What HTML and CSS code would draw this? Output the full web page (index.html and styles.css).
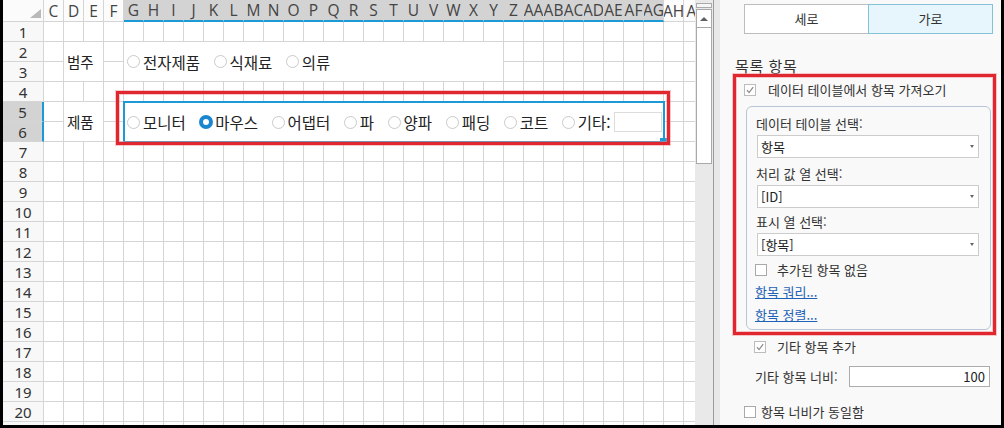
FILE: index.html
```html
<!DOCTYPE html>
<html lang="ko">
<head>
<meta charset="utf-8">
<title>목록 항목</title>
<link rel="stylesheet" href="styles.css">
</head>
<body>
<div class="frame">
  <div class="sheet">
    <div class="colhead">
      <div class="corner"><span class="tri"></span></div>
      <div class="ch">C</div><div class="ch">D</div><div class="ch">E</div><div class="ch">F</div>
      <div class="ch sel">G</div><div class="ch sel">H</div><div class="ch sel">I</div><div class="ch sel">J</div>
      <div class="ch sel">K</div><div class="ch sel">L</div><div class="ch sel">M</div><div class="ch sel">N</div>
      <div class="ch sel">O</div><div class="ch sel">P</div><div class="ch sel">Q</div><div class="ch sel">R</div>
      <div class="ch sel">S</div><div class="ch sel">T</div><div class="ch sel">U</div><div class="ch sel">V</div>
      <div class="ch sel">W</div><div class="ch sel">X</div><div class="ch sel">Y</div><div class="ch sel">Z</div>
      <div class="ch sel">AA</div><div class="ch sel">AB</div><div class="ch sel">AC</div><div class="ch sel">AD</div>
      <div class="ch sel">AE</div><div class="ch sel">AF</div><div class="ch sel">AG</div>
      <div class="ch">AH</div><div class="ch">AI</div>
    </div>
    <div class="sbody">
      <div class="rowhead">
        <div class="rh">1</div><div class="rh">2</div><div class="rh">3</div><div class="rh">4</div>
        <div class="rh sel">5</div><div class="rh sel">6</div><div class="rh">7</div><div class="rh">8</div>
        <div class="rh">9</div><div class="rh">10</div><div class="rh">11</div><div class="rh">12</div>
        <div class="rh">13</div><div class="rh">14</div><div class="rh">15</div><div class="rh">16</div>
        <div class="rh">17</div><div class="rh">18</div><div class="rh">19</div><div class="rh">20</div>
        <div class="rh"></div>
      </div>
      <div class="cells">
        <div class="merged cat-label">범주</div>
        <div class="merged cat-radios radios">
          <span class="ri"><span class="rc"></span>전자제품</span>
          <span class="ri"><span class="rc"></span>식재료</span>
          <span class="ri"><span class="rc"></span>의류</span>
        </div>
        <div class="merged prod-label">제품</div>
        <div class="selection radios">
          <span class="ri"><span class="rc"></span>모니터</span>
          <span class="ri"><span class="rc on"></span>마우스</span>
          <span class="ri"><span class="rc"></span>어댑터</span>
          <span class="ri"><span class="rc"></span>파</span>
          <span class="ri"><span class="rc"></span>양파</span>
          <span class="ri"><span class="rc"></span>패딩</span>
          <span class="ri"><span class="rc"></span>코트</span>
          <span class="ri last"><span class="rc"></span>기타:<span class="other"></span></span>
          <span class="handle"></span>
        </div>
        <div class="sheet-mark"></div>
      </div>
    </div>
  </div>

  <div class="vscroll">
    <div class="split"></div>
    <div class="sbtn"><span class="uparrow"></span></div>
    <div class="thumb"></div>
  </div>
  <div class="splitter"></div>

  <div class="panel">
    <div class="seg">
      <div class="segbtn">세로</div>
      <div class="segbtn on">가로</div>
    </div>
    <div class="ptitle">목록 항목</div>
    <div class="pmark">
      <div class="chk first"><span class="box checked"><svg viewBox="0 0 12 12" width="12" height="12"><path d="M3 6.3 L5.1 8.6 L9.2 3.2" fill="none" stroke="#8e8e8e" stroke-width="1.3"/></svg></span><span>데이터 테이블에서 항목 가져오기</span></div>
      <div class="group">
        <div class="flabel l1">데이터 테이블 선택:</div>
        <div class="dd"><span>항목</span><span class="caret"></span></div>
        <div class="flabel l2">처리 값 열 선택:</div>
        <div class="dd"><span>[ID]</span><span class="caret"></span></div>
        <div class="flabel l3">표시 열 선택:</div>
        <div class="dd"><span>[항목]</span><span class="caret"></span></div>
        <div class="chk inner"><span class="box"></span><span>추가된 항목 없음</span></div>
        <a class="lnk l-a" href="#">항목 쿼리...</a>
        <a class="lnk l-b" href="#">항목 정렬...</a>
      </div>
    </div>
    <div class="chk other-add"><span class="box checked"><svg viewBox="0 0 12 12" width="12" height="12"><path d="M3 6.3 L5.1 8.6 L9.2 3.2" fill="none" stroke="#8e8e8e" stroke-width="1.3"/></svg></span><span>기타 항목 추가</span></div>
    <div class="frow"><span>기타 항목 너비:</span><div class="num">100</div></div>
    <div class="chk same"><span class="box"></span><span>항목 너비가 동일함</span></div>
  </div>
</div>
</body>
</html>
```

FILE: styles.css
```css
* { box-sizing: border-box; }
html, body { margin: 0; padding: 0; }
body {
  background: #000;
  width: 1004px;
  height: 428px;
  overflow: hidden;
  font-family: "Noto Sans CJK KR", "Noto Sans", sans-serif;
  color: #333;
}
.frame {
  display: flex;
  margin: 0 3px;
  height: 425px;
  background: #fff;
  overflow: hidden;
}

/* ---------- sheet ---------- */
.sheet {
  width: 692px;
  flex: none;
  overflow: hidden;
  display: flex;
  flex-direction: column;
  background: #fff;
}
.colhead { display: flex; height: 22px; flex: none; }
.corner {
  width: 41px;
  flex: none;
  border-right: 1px solid #d5d5d5;
  border-bottom: 1px solid #d5d5d5;
  background: #fbfbfb;
  display: flex;
  justify-content: flex-end;
  align-items: flex-end;
  padding: 0 2px 3px 0;
}
.tri {
  width: 0; height: 0;
  border-left: 11px solid transparent;
  border-bottom: 9px solid #b9b9b9;
}
.ch {
  width: 20px;
  flex: none;
  border-right: 1px solid #d5d5d5;
  border-bottom: 1px solid #d5d5d5;
  display: flex;
  justify-content: center;
  align-items: center;
  overflow: hidden;
  white-space: nowrap;
  font: 15.5px/20px "Open Sans", "Noto Sans", sans-serif;
  color: #444;
  background: #fcfcfc;
}
.ch.sel {
  background: #d3d3d3;
  border-right-color: #d3d3d3;
  border-bottom: 2px solid #1b9ad6;
}
.sbody { display: flex; flex: 1; min-height: 0; }
.rowhead { width: 41px; flex: none; display: flex; flex-direction: column; }
.rh {
  height: 20px;
  flex: none;
  border-right: 1px solid #d5d5d5;
  border-bottom: 1px solid #d5d5d5;
  background: #f8f8f8;
  display: flex;
  align-items: center;
  justify-content: center;
  font: 15px/20px "Noto Sans", sans-serif;
  color: #333;
}
.rh.sel { background: #d3d3d3; border-right: 2px solid #1b9ad6; }

.cells {
  width: 660px;
  flex: none;
  display: grid;
  grid-template-columns: repeat(33, 20px);
  grid-template-rows: repeat(21, 20px);
  background-color: #fff;
  background-image:
    linear-gradient(90deg, transparent 19px, #d5d5d5 19px),
    linear-gradient(180deg, transparent 19px, #d5d5d5 19px);
  background-size: 20px 20px;
}
.merged {
  background: #fff;
  margin: 0 1px 1px 0;
  display: flex;
  align-items: center;
  font-size: 14.5px;
  line-height: 20px;
  color: #222;
}
.cat-label { grid-column: 2 / span 2; grid-row: 2 / span 2; padding-left: 3px; }
.prod-label { grid-column: 2 / span 2; grid-row: 5 / span 2; padding-left: 3px; }
.cat-radios { grid-column: 5 / span 19; grid-row: 2 / span 2; padding-left: 3px; }

.radios { display: flex; align-items: center; font-size: 15.5px; line-height: 20px; color: #222; white-space: nowrap; }
.ri { display: flex; align-items: center; gap: 3px; margin-right: 13.5px; }
.ri.last { margin-right: 0; }
.rc {
  width: 13px; height: 13px;
  border-radius: 50%;
  border: 1px solid #cacaca;
  background: #fff;
  flex: none;
}
.rc.on { width: 14px; height: 14px; border: 4px solid #1a86cf; margin-right: -1px; }
.other {
  width: 48px; height: 20px;
  border: 1px solid #dcdcdc;
  background: #fff;
}
.selection {
  grid-column: 5 / span 27;
  grid-row: 5 / span 2;
  margin: -1px;
  border: 2px solid #1b9ad6;
  background: #fff;
  padding-left: 2px;
  position: relative;
}
.handle {
  position: absolute;
  right: -4px;
  bottom: -3px;
  width: 7px; height: 6px;
  background: #1b9ad6;
}
.sheet-mark {
  grid-column: 5 / span 27;
  grid-row: 5 / span 2;
  margin: -11px -6px -3px -8px;
  border: 3px solid #e0262f;
  box-shadow: 0 0 0 1px rgba(240, 130, 135, .45), inset 0 0 0 1px rgba(240, 130, 135, .45);
  z-index: 2;
  pointer-events: none;
}

/* ---------- scrollbar ---------- */
.vscroll {
  width: 18px;
  flex: none;
  background: #e9e9e9;
  display: flex;
  flex-direction: column;
  align-items: center;
  padding-top: 3px;
}
.split { width: 16px; height: 5px; border: 1px solid #a9a9a9; background: #f6f6f6; flex: none; }
.sbtn {
  width: 16px; height: 19px;
  margin-top: 1px;
  border: 1px solid #a9a9a9;
  background: #fff;
  display: flex; justify-content: center; align-items: center;
  flex: none;
}
.uparrow {
  width: 0; height: 0;
  border-left: 4px solid transparent;
  border-right: 4px solid transparent;
  border-bottom: 4px solid #5e5e5e;
}
.thumb { width: 16px; height: 137px; margin-top: -1px; border: 1px solid #a9a9a9; background: #fff; flex: none; }
.splitter { width: 7px; flex: none; background: #e8e8e8; border-left: 1px solid #9c9c9c; }

/* ---------- panel ---------- */
.panel {
  width: 281px;
  flex: none;
  background: #f9f9f9;
  padding: 4px 8px 0 24px;
  display: flex;
  flex-direction: column;
  font-size: 13px;
  line-height: 16px;
  color: #333;
}
.seg { display: flex; height: 30px; flex: none; }
.segbtn {
  flex: 1;
  display: flex; align-items: center; justify-content: center;
  background: #fff;
  border: 1px solid #bdbdbd;
  color: #333;
}
.segbtn.on { background: #e6f6fc; border-color: #83c3d5; margin-left: -1px; }
.ptitle {
  margin: 23px 0 0 -9px;
  font-size: 15px;
  line-height: 17px;
  letter-spacing: 0.6px;
  color: #333;
}
.pmark {
  margin: 0 -3px 0 -11px;
  border: 3px solid #e0262f;
  box-shadow: 0 0 0 1px rgba(240, 130, 135, .45), inset 0 0 0 1px rgba(240, 130, 135, .45);
  padding: 5px 2px 0 8px;
}
.chk { display: flex; align-items: center; height: 16px; white-space: nowrap; }
.box {
  width: 12px; height: 12px;
  border: 1px solid #a9a9a9;
  background: #fff;
  flex: none;
  display: flex; align-items: center; justify-content: center;
}
.box svg { display: block; flex: none; }
.box.checked { border-color: #bcbcbc; }
.chk.first .box { margin-right: 12px; }
.group {
  margin: 8px 0 2px 2px;
  border: 1px solid #b9c5d6;
  border-radius: 6px;
  padding: 9px 9px 6px 9px;
  display: flex;
  flex-direction: column;
  align-items: flex-start;
}
.flabel { height: 16px; margin-bottom: 3px; white-space: nowrap; }
.l2 { margin-top: 8px; }
.l3 { margin-top: 6px; }
.dd {
  width: 222px; height: 23px;
  margin-left: 1px;
  border: 1px solid #cccccc;
  background: #fff;
  display: flex; align-items: center; justify-content: space-between;
  padding: 0 4px 0 3px;
  color: #222;
}
.caret {
  width: 0; height: 0;
  border-left: 2.5px solid transparent;
  border-right: 2.5px solid transparent;
  border-top: 3px solid #666;
}
.chk.inner { margin-top: 6px; margin-left: -1px; }
.chk.inner .box { margin-right: 10px; }
.lnk { color: #1d62b6; text-decoration: underline; height: 16px; margin-left: -1px; white-space: nowrap; }
.l-a { margin-top: 6px; }
.l-b { margin-top: 7px; }
.chk.other-add { margin: 4px 0 0 10px; }
.chk.other-add .box { margin-right: 11px; }
.frow { display: flex; align-items: center; margin: 11px 0 0 11px; height: 21px; white-space: nowrap; }
.num {
  width: 141px; height: 21px;
  margin-left: auto;
  margin-right: 3px;
  border: 1px solid #acacac;
  background: #fff;
  display: flex; align-items: center; justify-content: flex-end;
  padding-right: 4px;
  color: #222;
}
.chk.same { margin-top: 17px; }
.chk.same .box { margin-right: 5px; }
```
